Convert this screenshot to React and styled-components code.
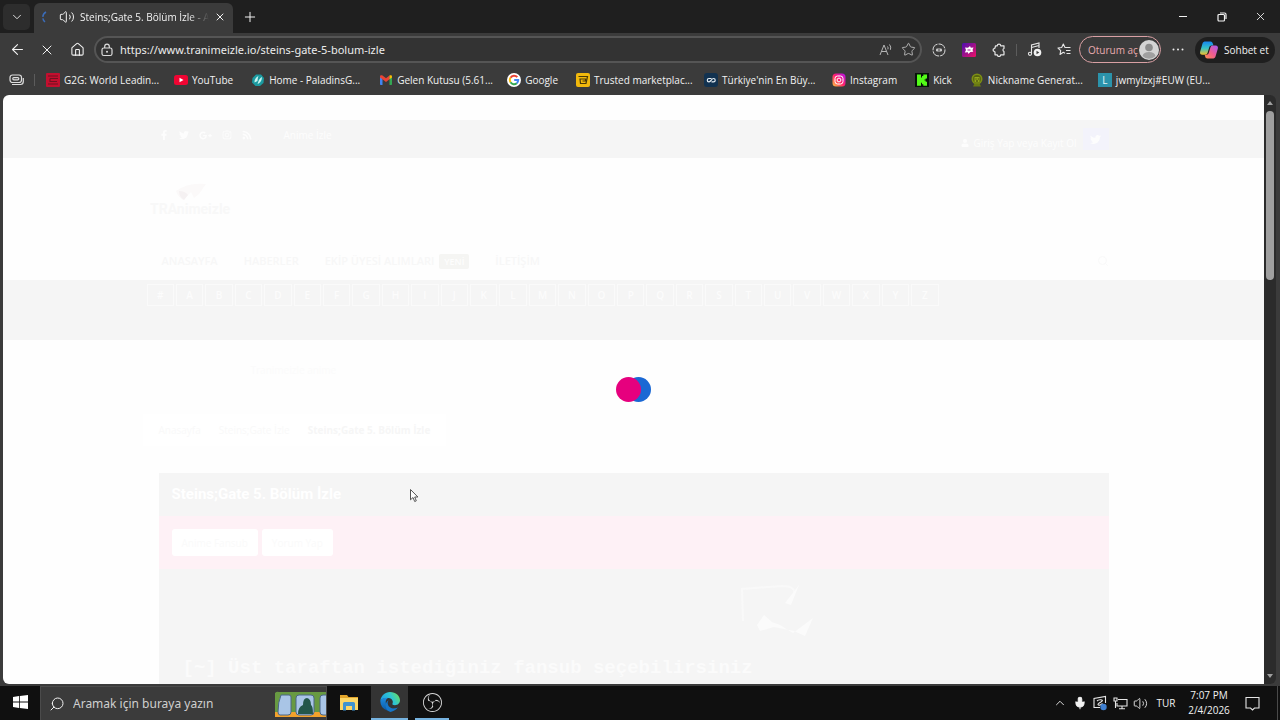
import React, { useState } from 'react'
import styled, { createGlobalStyle } from 'styled-components'
import {
    ArrowLeft, ChevronDown, ChevronUp, House, Mic, Plus,
    Search, Star, Volume2, X,
} from 'lucide-react'
import { FaFacebookF, FaGooglePlusG, FaInstagram, FaRss, FaTwitter, FaUser } from 'react-icons/fa'
import { SiObsstudio } from 'react-icons/si'

const GlobalStyle = createGlobalStyle`
* {
    box-sizing: border-box;
}
body {
    margin: 0;
    background: #3b3b3b;
    font-family: 'Open Sans', 'Noto Sans', sans-serif;
    font-size: 10px;
    color: #f2f2f2;
}
button, input {
    font: inherit;
    color: inherit;
}
button {
    padding: 0;
    border: none;
    background: transparent;
}
a {
    color: inherit;
    text-decoration: none;
}
svg {
    display: block;
    flex-shrink: 0;
}
`

const Desktop = styled.div`
height: 100vh;
display: flex;
flex-direction: column;
overflow: hidden;
position: relative;
`

/* tab strip */

const TabStrip = styled.div`
display: flex;
align-items: flex-end;
height: 33px;
padding-left: 3px;
background: #1f1f1f;
`

const TabMenu = styled.button`
display: flex;
align-items: center;
justify-content: center;
width: 27px;
height: 26px;
margin: 0 4px 3px 0;
border-radius: 5px;
background: #2d2d2d;
`

const Tab = styled.div`
display: flex;
align-items: center;
gap: 5px;
width: 199px;
height: 30px;
padding: 0 7px 3px 6px;
border-radius: 6px 6px 0 0;
background: #3b3b3b;
`

const TabTitle = styled.span`
flex: 1;
min-width: 0;
white-space: nowrap;
mask-image: linear-gradient(90deg, #000 84%, transparent);
`

const StripButton = styled.button`
display: flex;
align-items: center;
justify-content: center;
width: ${props => props.$width}px;
height: 33px;
`

const WindowButtons = styled.div`
display: flex;
margin-left: auto;
`

/* toolbar */

const Toolbar = styled.div`
display: flex;
align-items: center;
height: 33px;
padding: 0 5px 0 2px;
background: #3b3b3b;
`

const IconButton = styled.button`
display: flex;
align-items: center;
justify-content: center;
width: ${props => props.$width || 30}px;
height: 28px;
`

const AddressBar = styled.form`
flex: 1;
display: flex;
align-items: center;
height: 27px;
margin: 0 2px;
padding: 0 0 0 4px;
border: 2px solid #555;
border-radius: 14px;
background: #333;
`

const AddressInput = styled.input`
flex: 1;
min-width: 0;
margin-left: 6px;
padding: 0;
border: none;
outline: none;
background: transparent;
color: #ececec;
font-family: 'Noto Sans', sans-serif;
font-size: 11px;
`

const AddressButton = styled(IconButton)`
width: 23px;
height: 22px;
`

const Divider = styled.span`
width: 1px;
height: 12px;
margin: 0 2px;
background: #5c5c5c;
`

const SignIn = styled.button`
display: flex;
align-items: center;
justify-content: space-between;
width: 82px;
height: 27px;
padding: 0 1px 0 8px;
border: 1px solid #d9a0a4;
border-radius: 14px;
color: #e8abaf;
white-space: nowrap;
`

const Copilot = styled.button`
display: flex;
align-items: center;
gap: 5px;
width: 80px;
height: 26px;
padding-left: 4px;
border-radius: 13px;
background: #1f1f1f;
white-space: nowrap;
`

/* favorites */

const Favorites = styled.nav`
display: flex;
align-items: center;
height: 29px;
padding: 0 0 1px 1px;
background: #3b3b3b;
`

const Favorite = styled.a`
display: flex;
align-items: center;
gap: 4px;
width: ${props => props.$long ? '128px' : 'auto'};
padding-right: ${props => props.$long ? 0 : 18}px;
white-space: nowrap;
`

const FavoriteDivider = styled(Divider)`
margin: 0 11px 0 3px;
`

/* page */

const Viewport = styled.div`
flex: 1;
min-height: 0;
display: flex;
padding: 0 4px 2px 3px;
`

const Page = styled.main`
flex: 1;
display: flex;
flex-direction: column;
overflow: hidden;
border-radius: 6px 0 0 6px;
background: #fefefe;
position: relative;
`

const Wrap = styled.div`
width: 950px;
max-width: 100%;
margin: 0 auto;
`

const TopBar = styled.div`
flex-shrink: 0;
height: 38px;
margin-top: 25px;
background: #f5f5f5;
color: #fdfdfd;
`

const TopBarRow = styled(Wrap)`
display: flex;
align-items: flex-start;
padding-top: 8px;
line-height: 14px;
`

const Socials = styled.div`
display: flex;
align-items: center;
gap: 10px;
height: 14px;
margin-right: 32px;
`

const Account = styled.a`
display: flex;
align-items: center;
gap: 4px;
height: 14px;
margin: 8px 6px 0 auto;
`

const TwitterBadge = styled.a`
display: flex;
align-items: center;
justify-content: center;
width: 26px;
height: 22px;
background: #f3f3fb;
`

const SiteHeader = styled(Wrap)`
flex-shrink: 0;
display: flex;
flex-direction: column;
justify-content: space-between;
height: 122px;
padding: 22px 0 10px;
`

const SiteLogo = styled.a`
margin-left: -9px;
`

const MenuRow = styled.nav`
display: flex;
align-items: center;
gap: 26px;
padding-left: 3px;
font-size: 11px;
line-height: 18px;
font-weight: 600;
color: #f7f7f7;
`

const MenuLink = styled.a`
display: flex;
align-items: center;
gap: 5px;
`

const NewBadge = styled.span`
width: 30px;
height: 15px;
border-radius: 2px;
background: #f5f5f3;
color: #fdfdfd;
font-size: 9px;
line-height: 15px;
text-align: center;
`

const SiteSearch = styled.button`
display: flex;
margin-left: auto;
color: #f9f9f9;
`

const LetterBar = styled.div`
flex-shrink: 0;
height: 60px;
padding-top: 4px;
background: #f5f5f5;
`

const Letters = styled(Wrap)`
padding-right: 170px;
`

const LetterGrid = styled.div`
display: grid;
grid-template-columns: repeat(27, 1fr);
column-gap: 2px;
margin-left: -12px;
`

const Letter = styled.a`
height: 22px;
border: 1px solid #fafafa;
color: #fcfcfc;
font-weight: 600;
line-height: 20px;
text-align: center;
`

const Main = styled(Wrap)`
flex: 1;
display: flex;
flex-direction: column;
`

const Notice = styled.p`
margin: 23px 0 0 92px;
line-height: 14px;
color: #fbfbfb;
`

const Crumbs = styled.nav`
display: flex;
align-items: center;
gap: 18px;
align-self: flex-start;
height: 32px;
margin: 37px 0 27px -16px;
padding: 0 16px;
background: #fff;
color: #f9f9f9;

b {
    color: #f6f6f6;
}
`

const Player = styled.section`
flex: 1;
background: #f5f5f5;
`

const PlayerTitle = styled.h1`
margin: 0;
padding: 0 13px;
font-family: Roboto, sans-serif;
font-size: 15px;
font-weight: 700;
line-height: 43px;
color: #fff;
`

const SourceBar = styled.div`
display: flex;
gap: 4px;
padding: 13px;
background: #fef1f6;
`

const SourceButton = styled.button`
height: 27px;
padding: 0 10px;
border-radius: 3px;
background: #fff;
color: #fafafa;
`

const Stage = styled.div`
display: flex;
flex-direction: column;
padding: 14px 24px 0;
`

const StageArt = styled.svg`
width: 76px;
height: 60px;
margin-left: 556px;
`

const StageText = styled.p`
margin: 13px 0 0;
font-family: 'Liberation Mono', monospace;
font-size: 19px;
font-weight: 700;
line-height: 24px;
color: #fbfbfb;
white-space: nowrap;
`

const Loader = styled.div`
display: flex;
align-items: center;
justify-content: center;
position: absolute;
inset: 0;
pointer-events: none;
`

const Dot = styled.span`
width: 25px;
height: 25px;
border-radius: 50%;
background: ${props => props.$color};
z-index: ${props => props.$front ? 1 : 0};

& + & {
    margin-left: -15px;
}
`

const Scrollbar = styled.div`
display: flex;
flex-direction: column;
align-items: center;
width: 12px;
padding: 6px 0;
border-radius: 0 6px 6px 0;
background: #2b2b2b;
`

const ScrollThumb = styled.div`
width: 8px;
height: 169px;
margin: 6px 0 auto;
border-radius: 4px;
background: #9f9f9f;
`

/* taskbar */

const Taskbar = styled.footer`
display: flex;
height: 34px;
background: #101010;
`

const TaskButton = styled.button`
display: flex;
align-items: center;
justify-content: center;
width: ${props => props.$width}px;
height: 34px;
background: ${props => props.$active ? '#343434' : 'transparent'};
border-bottom: 2px solid ${props => props.$open ? '#76b3e0' : 'transparent'};

&:last-of-type {
    margin-left: 7px;
}
`

const TaskSearch = styled.label`
display: flex;
align-items: center;
gap: 8px;
width: 287px;
padding-left: 8px;
border: 1px solid #4b4b4b;
border-bottom: none;
background: #3b3b3b;
`

const SearchGlyph = styled(Search)`
transform: scaleX(-1);
`

const TaskInput = styled.input`
flex: 1;
min-width: 0;
padding: 0;
border: none;
outline: none;
background: transparent;
font-family: 'Noto Sans', sans-serif;
font-size: 12px;

&::placeholder {
    color: #cfcfcf;
    opacity: 1;
}
`

const Tray = styled.div`
display: flex;
align-items: center;
margin-left: auto;
margin-right: 2px;
padding-right: 9px;
border-right: 1px solid #4a4a4a;
`

const TrayButton = styled.button`
display: flex;
align-items: center;
justify-content: center;
width: ${props => props.$width || 20}px;
height: 34px;
`

const Clock = styled.time`
width: 54px;
line-height: 15px;
text-align: center;
`

const Pointer = styled.svg`
position: absolute;
left: 409px;
top: 488px;
width: 10px;
height: 15px;
`

const art = { width: 14, height: 14, viewBox: '0 0 14 14' }

const G2GIcon = () => (
    <svg {...art}>
        <rect width="14" height="14" rx="1" fill="#c30f2f" />
        <path d="M2 3h10M4 5.500h8M4 5.500v3h7M2 11h10" stroke="#6f1220" strokeWidth="1.1" fill="none" />
    </svg>
)

const YouTubeIcon = () => (
    <svg {...art}>
        <rect x="0" y="2" width="14" height="10" rx="2.5" fill="#f00533" />
        <path d="M5.5 4.8 9.5 7l-4 2.2z" fill="#fff" />
    </svg>
)

const PaladinsIcon = () => (
    <svg {...art}>
        <path d="M5 1.500h5L13 5l-.5 5L9 13H4.500L1 9.500 1.500 5z" fill="#1b9aa0" />
        <path d="M3.500 9.500c0-3 1.500-5.500 4-6.500-.8 2-.8 3-1 5zM6.500 11c1-2 1-5 4.500-7-.2 3-1 5.500-4.500 7z" fill="#c9f5f1" />
    </svg>
)

const GmailIcon = () => (
    <svg {...art}>
        <path d="M1 3.500 3.500 5v7H1.800C1.300 12 1 11.700 1 11.200z" fill="#4285f4" />
        <path d="M13 3.500 10.500 5v7h1.700c.5 0 .8-.3.8-.8z" fill="#34a853" />
        <path d="M1 3.500C1 2 2.500 1.800 3.500 2.600L7 5.200l3.500-2.600v3.700L7 9 3.500 6.300 1 4.500z" fill="#ea4335" />
        <path d="M10.500 2.600C11.500 1.800 13 2 13 3.500v1l-2.500 1.800z" fill="#fbbc04" />
    </svg>
)

const GoogleIcon = () => (
    <svg {...art}>
        <circle cx="7" cy="7" r="7" fill="#fff" />
        <g fill="none" strokeWidth="2">
            <path d="M10.300 4.200A4.200 4.200 0 0 0 3.500 4.800" stroke="#ea4335" />
            <path d="M3.500 4.800a4.200 4.200 0 0 0 0 4.400" stroke="#fbbc05" />
            <path d="M3.500 9.200a4.200 4.200 0 0 0 6.300 1" stroke="#34a853" />
            <path d="M9.800 10.200A4.200 4.200 0 0 0 11.200 7H7.200" stroke="#4285f4" />
        </g>
    </svg>
)

const MarketIcon = () => (
    <svg {...art}>
        <rect width="14" height="14" rx="2" fill="#f2b90c" />
        <path d="M2.500 3.500h9l-1.500 7H4.500L4 6h5.500v2H6.500" stroke="#4b3a06" strokeWidth="1.200" fill="none" />
    </svg>
)

const SteelIcon = () => (
    <svg {...art}>
        <rect width="14" height="14" rx="3" fill="#123250" />
        <path d="M7.500 5.500H5a1.700 1.700 0 0 0 0 3.400c2 0 2.500-3.400 4.500-3.400a1.700 1.700 0 0 1 0 3.400H7.500" stroke="#e6edf3" strokeWidth="1.200" fill="none" />
    </svg>
)

const InstagramIcon = () => (
    <svg {...art}>
        <defs>
            <linearGradient id="insta" x1="0" y1="1" x2="1" y2="0">
                <stop offset="0" stopColor="#ffc83d" />
                <stop offset=".5" stopColor="#ff1f6d" />
                <stop offset="1" stopColor="#b012f0" />
            </linearGradient>
        </defs>
        <rect x=".5" y=".5" width="13" height="13" rx="3.500" fill="url(#insta)" />
        <rect x="3" y="3" width="8" height="8" rx="2.500" fill="none" stroke="#fff" />
        <circle cx="7" cy="7" r="1.900" fill="none" stroke="#fff" />
    </svg>
)

const KickIcon = () => (
    <svg {...art}>
        <rect width="14" height="14" fill="#07130a" />
        <path d="M2 1.500h4v3h1V3h1.300V1.500H12v4h-1.300V6.500H9.500v1h1.200v1.200H12v4H8.300v-1.500H7V9.700H6v3H2z" fill="#53fc18" />
    </svg>
)

const NicknameIcon = () => (
    <svg {...art}>
        <circle cx="7" cy="6" r="4.700" fill="#56630f" stroke="#7d8f14" strokeWidth="1.600" />
        <path d="M4.500 4h5v4.500l-1 1h-3l-1-1z" fill="#93a51c" />
        <path d="M3 13.500l1.500-3h5l1.500 3z" fill="#6a7a12" />
        <path d="M5.500 6h1M7.800 6h1M6 8h2" stroke="#323a08" />
    </svg>
)

const LetterTile = styled.span`
width: 14px;
height: 14px;
background: #2b93ab;
color: #e5f6fa;
line-height: 14px;
text-align: center;
`

const CopilotIcon = () => (
    <svg width="20" height="20" viewBox="0 0 20 20">
        <defs>
            <linearGradient id="copA" x1="0" y1="0" x2="0" y2="1">
                <stop offset="0" stopColor="#1686f0" />
                <stop offset=".5" stopColor="#35c2c6" />
                <stop offset="1" stopColor="#f5c22c" />
            </linearGradient>
            <linearGradient id="copB" x1="1" y1="0" x2="0" y2="1">
                <stop offset="0" stopColor="#a55bf5" />
                <stop offset=".5" stopColor="#ee5b93" />
                <stop offset="1" stopColor="#ff8d4a" />
            </linearGradient>
        </defs>
        <path d="M6.500 1.500h5c1.500 0 2 1 2.400 2.300l.5 1.700h-1.700c-1.500 0-2.200.8-2.600 2.200l-1.500 5.100c-.4 1.300-1 2-2.500 2H3.500C1.500 14.800.6 13.500 1.200 11.500l2.300-8C4 2 5 1.500 6.500 1.500z" fill="url(#copA)" />
        <path d="M13.500 18.500h-5c-1.500 0-2-1-2.400-2.300l-.4-1.400h1.600c1.500 0 2.200-.8 2.600-2.200l1.500-5.100c.4-1.300 1-2 2.500-2h2.600c2 0 2.900 1.300 2.300 3.300l-2.300 7.700c-.5 1.500-1.500 2-3 2z" fill="url(#copB)" />
    </svg>
)

const AvatarIcon = () => (
    <svg width="20" height="20" viewBox="0 0 20 20">
        <circle cx="10" cy="10" r="10" fill="#d4d4d4" />
        <circle cx="10" cy="7.500" r="3.800" fill="#8c8c8c" />
        <path d="M3.500 16c.5-2.800 3-4 6.500-4s6 1.200 6.500 4a9 9 0 0 1-13 0z" fill="#a0a0a0" />
    </svg>
)

const SpinnerIcon = () => (
    <svg width="14" height="14" viewBox="0 0 14 14">
        <path d="M6 2A6 6 0 0 0 5 12" fill="none" stroke="#3b6cb8" strokeWidth="1.500" strokeDasharray="6 1.500" />
    </svg>
)

const LockIcon = () => (
    <svg width="14" height="14" viewBox="0 0 14 14" fill="none" stroke="#dcdcdc" strokeWidth="1.200">
        <rect x="2" y="5" width="10" height="7.500" rx="1.800" />
        <path d="M4.700 5V3.500a2.300 2.300 0 0 1 4.600 0V5" />
        <circle cx="7" cy="8.700" r="1" fill="#dcdcdc" stroke="none" />
    </svg>
)

const ReadAloudIcon = () => (
    <svg width="14" height="14" viewBox="0 0 14 14" fill="none" stroke="#b4b4b4" strokeWidth="1">
        <path d="M1 12 5 2l4 10M2.500 8.500h5M8.500 3.500q1 1.200.4 2.800M10.500 1.500q2 2.500.9 5.300" />
    </svg>
)

const BadgeIcon = () => (
    <svg width="14" height="14" viewBox="0 0 14 14" fill="none" stroke="#dcdcdc">
        <circle cx="7" cy="7" r="6" strokeDasharray="8 1" />
        <rect x="4" y="5.500" width="6" height="3" rx="1.200" fill="#c8c8c8" stroke="none" />
        <path d="M7 6v2" stroke="#3b3b3b" />
    </svg>
)

const ExtensionIcon = () => (
    <svg width="14" height="14" viewBox="0 0 14 14">
        <defs>
            <linearGradient id="ext" x1="0" y1="0" x2="1" y2="1">
                <stop offset="0" stopColor="#4a0fb0" />
                <stop offset="1" stopColor="#ee1166" />
            </linearGradient>
        </defs>
        <rect width="14" height="14" rx="1.500" fill="url(#ext)" />
        <path d="M3 4.500l3 .3L8 3l.8 1.800 2.700-.3-1 2.500.8 1.800-3 .2L6.500 11 5.800 9.300l-3 .2L4 7z" fill="#fff" />
        <path d="M5.500 7h3" stroke="#a31a93" />
    </svg>
)

const PuzzleIcon = () => (
    <svg width="14" height="14" viewBox="0 0 14 14" fill="none" stroke="#e6e6e6" strokeWidth="1.200" strokeLinejoin="round">
        <path d="M3.500 2.800h1.800a1.700 1.700 0 0 1 3.400 0H12v2.700a1.600 1.600 0 0 0 0 3V11.800H8.700a1.700 1.700 0 0 1-3.400 0H3V9L1.200 7.800V6.200L3 5z" />
    </svg>
)

const MusicIcon = () => (
    <svg width="15" height="15" viewBox="0 0 15 15" fill="none" stroke="#e6e6e6" strokeWidth="1.100">
        <path d="M4.500 11.500V3L12 1v5M4.500 5.500 12 3.500" />
        <circle cx="3" cy="11.800" r="1.600" />
        <circle cx="10.500" cy="10.500" r="3.800" fill="#f2f2f2" stroke="none" />
        <path d="M9.500 8.700v3.600l2.800-1.800z" fill="#3b3b3b" stroke="none" />
    </svg>
)

const CollectionsIcon = () => (
    <svg width="15" height="14" viewBox="0 0 15 14" fill="none" stroke="#e6e6e6" strokeWidth="1.100" strokeLinejoin="round">
        <path d="M8 10.200 6.300 9.300 3 11.500l.7-3.800L1 5l3.700-.5L6.300 1l1.700 3.500h5.500M9 7.500h4.500M9.500 10.500h4" />
    </svg>
)

const StackIcon = () => (
    <svg width="15" height="12" viewBox="0 0 15 12" fill="none" stroke="#dedede" strokeWidth="1.200">
        <rect x="1" y="1" width="11.500" height="7.500" rx="2.500" />
        <rect x="3.800" y="3.600" width="6" height="2.200" rx="1" />
        <path d="M3 10.500h8.500c1.700 0 2.800-1 2.800-3V4" />
    </svg>
)

const WindowsLogo = () => (
    <svg width="15" height="14" viewBox="0 0 15 14" fill="#fff">
        <path d="M0 2l6-.9v5.500H0zM6.800 1 15 0v6.600H6.800zM0 7.400h6v5.500L0 12zM6.800 7.400H15V14l-8.200-1.100z" />
    </svg>
)

const TrainArt = () => (
    <svg width="51" height="26" viewBox="0 0 51 26">
        <path d="M0 2q2-2 4-1h47v25H0z" fill="#689a42" />
        <path d="M0 21h51v5H0z" fill="#f3a22c" />
        <g fill="#a9c5e6" stroke="#4a6688" strokeWidth="1">
            <path d="M6 4h8q2 0 2 2v15q0 3-3 3H5q-2 0-2-3 0-10 3-17z" />
            <rect x="21" y="4" width="18" height="20" rx="3" />
            <path d="M51 4h-3q-3 0-3 3v14q0 3 3 3h3" />
        </g>
        <path d="M23 23q0-7 5-9 0-7 4-7 4 1 4 7 2 1 2 9z" fill="#23564a" />
    </svg>
)

const FolderIcon = () => (
    <svg width="20" height="17" viewBox="0 0 20 17">
        <path d="M1 1h7l1.500 2H19v4H1z" fill="#e3a52a" />
        <path d="M1 4h18v12H1z" fill="#fbd667" />
        <path d="M4 16.500V9.500Q4 8 5.500 8h9Q16 8 16 9.500v7h-3V12H7v4.500z" fill="#3f93d0" />
    </svg>
)

const EdgeIcon = () => (
    <svg width="20" height="20" viewBox="0 0 20 20">
        <defs>
            <linearGradient id="edgeA" x1="0" y1=".6" x2="1" y2=".2">
                <stop offset="0" stopColor="#1c9be6" />
                <stop offset=".55" stopColor="#2fc6d2" />
                <stop offset="1" stopColor="#6be05b" />
            </linearGradient>
            <linearGradient id="edgeB" x1="0" y1="0" x2="0" y2="1">
                <stop offset="0" stopColor="#1d8be0" />
                <stop offset="1" stopColor="#0c59a4" />
            </linearGradient>
        </defs>
        <path d="M.3 9C1 3.500 5 0 10 0c6 0 10 4 10 8.300 0 3-2.300 4.900-5 4.900-2.300 0-3-.9-2.500-1.700.9-1.500.3-5-4-5.500C4.500 5.700 1.500 7 .3 9z" fill="url(#edgeA)" />
        <path d="M.3 9C1.500 6.500 5 5.300 8 6 6 7 5 9.500 6.200 12.500c1.500 3.700 6.300 5.500 11.300 3.300A10 10 0 0 1 .3 9z" fill="url(#edgeB)" />
        <path d="M8.600 8.200c-1.300 1.600-1.300 4.300.4 6.300 2 2.200 5.800 2.700 8.800 1-1.500 2.200-4.300 4-7.300 4.400C5.500 19 3.500 11 8.600 8.200z" fill="#1676c9" />
    </svg>
)

const PenIcon = () => (
    <svg width="16" height="16" viewBox="0 0 16 16" fill="none" stroke="#e6e6e6" strokeWidth="1.100">
        <path d="M13.500 8V1.500L2 3.500v9h6M5 6c1.500-1.500 5-1.500 5.500-.5S5.500 8 6 9.500s3 .5 4.500-1" />
        <circle cx="11.500" cy="12" r="3.200" fill="#3f7fd0" stroke="none" />
    </svg>
)

const NetworkIcon = () => (
    <svg width="15" height="13" viewBox="0 0 15 13" fill="none" stroke="#e6e6e6" strokeWidth="1.100">
        <path d="M5 2.500h9v6.500H4V6M9 9v2.500M6 11.800h6M1 1h3v3H1zM2.500 4v7" />
    </svg>
)

const NotifyIcon = () => (
    <svg width="15" height="15" viewBox="0 0 15 15" fill="none" stroke="#e6e6e6" strokeWidth="1.100">
        <path d="M1 1.500h13v10.500H9.500l-2 2-2-2H1z" />
    </svg>
)

const favorites = [
    { label: 'G2G: World Leadin...', icon: <G2GIcon />, long: true },
    { label: 'YouTube', icon: <YouTubeIcon /> },
    { label: 'Home - PaladinsG...', icon: <PaladinsIcon />, long: true },
    { label: 'Gelen Kutusu (5.61...', icon: <GmailIcon />, long: true },
    { label: 'Google', icon: <GoogleIcon /> },
    { label: 'Trusted marketplac...', icon: <MarketIcon />, long: true },
    { label: "Türkiye'nin En Büy...", icon: <SteelIcon />, long: true },
    { label: 'Instagram', icon: <InstagramIcon /> },
    { label: 'Kick', icon: <KickIcon /> },
    { label: 'Nickname Generat...', icon: <NicknameIcon />, long: true },
    { label: 'jwmylzxj#EUW (EU...', icon: <LetterTile>L</LetterTile>, long: true },
]

const letters = '#ABCDEFGHIJKLMNOPQRSTUVWXYZ'.split('')

const Browser = () => {

    const [url, setUrl] = useState('https://www.tranimeizle.io/steins-gate-5-bolum-izle')

    return (
        <>
            <TabStrip>
                <TabMenu aria-label="Sekme menüsü"><ChevronDown size={14} strokeWidth={1.500} /></TabMenu>
                <Tab>
                    <SpinnerIcon />
                    <Volume2 size={16} strokeWidth={1.500} />
                    <TabTitle>Steins;Gate 5. Bölüm İzle - Ani</TabTitle>
                    <button aria-label="Sekmeyi kapat"><X size={12} strokeWidth={2} /></button>
                </Tab>
                <StripButton $width={34} aria-label="Yeni sekme"><Plus size={16} strokeWidth={1.500} /></StripButton>
                <WindowButtons>
                    <StripButton $width={38} aria-label="Simge durumuna küçült">
                        <svg width="10" height="10" viewBox="0 0 10 10" stroke="#f2f2f2"><path d="M1 4.500h8" /></svg>
                    </StripButton>
                    <StripButton $width={39} aria-label="Önceki boyut">
                        <svg width="10" height="10" viewBox="0 0 10 10" fill="none" stroke="#f2f2f2" strokeWidth="1.200">
                            <rect x="1" y="2.500" width="6.500" height="6.500" rx="1" />
                            <path d="M3 1h4.500Q9 1 9 2.500V7" />
                        </svg>
                    </StripButton>
                    <StripButton $width={39} aria-label="Kapat"><X size={13} strokeWidth={1.600} /></StripButton>
                </WindowButtons>
            </TabStrip>

            <Toolbar>
                <IconButton aria-label="Geri"><ArrowLeft size={17} strokeWidth={1.500} /></IconButton>
                <IconButton aria-label="Durdur"><X size={16} strokeWidth={1.500} /></IconButton>
                <IconButton aria-label="Giriş sayfası"><House size={15} strokeWidth={1.700} /></IconButton>
                <AddressBar onSubmit={e => e.preventDefault()}>
                    <LockIcon />
                    <AddressInput aria-label="Adres" spellCheck="false" value={url} onChange={e => setUrl(e.target.value)} />
                    <AddressButton type="button" aria-label="Sesli oku"><ReadAloudIcon /></AddressButton>
                    <AddressButton type="button" aria-label="Sık kullanılanlara ekle"><Star size={15} strokeWidth={1.500} color="#b8b8b8" /></AddressButton>
                </AddressBar>
                <IconButton aria-label="Engelleyici"><BadgeIcon /></IconButton>
                <IconButton aria-label="Eklenti"><ExtensionIcon /></IconButton>
                <IconButton aria-label="Uzantılar"><PuzzleIcon /></IconButton>
                <Divider />
                <IconButton aria-label="Medya"><MusicIcon /></IconButton>
                <IconButton aria-label="Sık kullanılanlar"><CollectionsIcon /></IconButton>
                <SignIn>Oturum aç<AvatarIcon /></SignIn>
                <IconButton $width={34} aria-label="Ayarlar">
                    <svg width="12" height="3" viewBox="0 0 12 3" fill="#ededed">
                        <circle cx="1.500" cy="1.500" r="1" /><circle cx="6" cy="1.500" r="1" /><circle cx="10.500" cy="1.500" r="1" />
                    </svg>
                </IconButton>
                <Copilot><CopilotIcon />Sohbet et</Copilot>
            </Toolbar>

            <Favorites>
                <IconButton aria-label="Çalışma alanları"><StackIcon /></IconButton>
                <FavoriteDivider />
                {favorites.map(item => (
                    <Favorite key={item.label} href="#" $long={item.long}>{item.icon}{item.label}</Favorite>
                ))}
            </Favorites>
        </>
    )
}

const Site = () => (
    <Page>
        <TopBar>
            <TopBarRow>
                <Socials>
                    <FaFacebookF size={10} />
                    <FaTwitter size={10} />
                    <FaGooglePlusG size={13} />
                    <FaInstagram size={10} />
                    <FaRss size={10} />
                </Socials>
                <a href="#">Anime İzle</a>
                <Account href="#"><FaUser size={8} />Giriş Yap veya Kayıt Ol</Account>
                <TwitterBadge href="#" aria-label="Twitter"><FaTwitter size={11} /></TwitterBadge>
            </TopBarRow>
        </TopBar>

        <SiteHeader>
            <SiteLogo href="#" aria-label="Tranimeizle">
                <svg width="84" height="38" viewBox="0 0 84 38">
                    <path d="M26 11q12-9 30-7l-7 10-5 4-3-6-8 8q-5-3-7-9z" fill="#fbf9f9" />
                    <path d="M29 11q6 0 9 4l-4 5q-5-3-5-9z" fill="#f5f1f2" />
                    <text x="0" y="34" fontFamily="Roboto" fontSize="14" fontWeight="700" fill="#f8f8f8">TRAnimeizle</text>
                </svg>
            </SiteLogo>
            <MenuRow>
                <MenuLink href="#">ANASAYFA</MenuLink>
                <MenuLink href="#">HABERLER</MenuLink>
                <MenuLink href="#">EKİP ÜYESİ ALIMLARI <NewBadge>YENİ</NewBadge></MenuLink>
                <MenuLink href="#">İLETİŞİM</MenuLink>
                <SiteSearch aria-label="Ara"><Search size={12} /></SiteSearch>
            </MenuRow>
        </SiteHeader>

        <LetterBar>
            <Letters>
                <LetterGrid>
                    {letters.map(letter => <Letter key={letter} href="#">{letter}</Letter>)}
                </LetterGrid>
            </Letters>
        </LetterBar>

        <Main>
            <Notice>Tranimeizle anime</Notice>
            <Crumbs>
                <a href="#">Anasayfa</a>
                <a href="#">Steins;Gate İzle</a>
                <b>Steins;Gate 5. Bölüm İzle</b>
            </Crumbs>
            <Player>
                <PlayerTitle>Steins;Gate 5. Bölüm İzle</PlayerTitle>
                <SourceBar>
                    <SourceButton>Anime Fansub</SourceButton>
                    <SourceButton>Yorum Yap</SourceButton>
                </SourceBar>
                <Stage>
                    <StageArt viewBox="0 0 76 60" fill="none" stroke="#f9f9f9" strokeWidth="2">
                        <path d="M4 38 3 6l40-3q14 0 12 8l-5 9" />
                        <path d="M60 2 52 22l-6-2zM18 42l7-10 8 7 8 3 13 8 20-15-8 18-11-5-20-4-14 4z" fill="#fbfbfb" stroke="none" />
                    </StageArt>
                    <StageText>[~] Üst taraftan istediğiniz fansub seçebilirsiniz</StageText>
                </Stage>
            </Player>
        </Main>

        <Loader>
            <Dot $color="#e6007e" $front />
            <Dot $color="#1a68d4" />
        </Loader>
    </Page>
)

const WindowsBar = () => (
    <Taskbar>
        <TaskButton $width={40} aria-label="Başlat"><WindowsLogo /></TaskButton>
        <TaskSearch>
            <SearchGlyph size={16} strokeWidth={1.500} />
            <TaskInput placeholder="Aramak için buraya yazın" aria-label="Aramak için buraya yazın" />
            <TrainArt />
        </TaskSearch>
        <TaskButton $width={44} aria-label="Dosya Gezgini"><FolderIcon /></TaskButton>
        <TaskButton $width={37} $active $open aria-label="Microsoft Edge"><EdgeIcon /></TaskButton>
        <TaskButton $width={34} $open aria-label="OBS Studio"><SiObsstudio size={19} color="#d8d8d8" /></TaskButton>
        <Tray>
            <TrayButton aria-label="Gizli simgeler"><ChevronUp size={14} strokeWidth={1.500} /></TrayButton>
            <TrayButton aria-label="Mikrofon"><Mic size={14} strokeWidth={1.800} fill="#f2f2f2" /></TrayButton>
            <TrayButton aria-label="Kalem"><PenIcon /></TrayButton>
            <TrayButton aria-label="Ağ"><NetworkIcon /></TrayButton>
            <TrayButton aria-label="Ses"><Volume2 size={15} strokeWidth={1.400} /></TrayButton>
            <TrayButton $width={32}>TUR</TrayButton>
            <Clock>7:07 PM<br />2/4/2026</Clock>
            <TrayButton $width={32} aria-label="Bildirimler"><NotifyIcon /></TrayButton>
        </Tray>
    </Taskbar>
)

const App = () => (
    <Desktop>
        <GlobalStyle />
        <Browser />
        <Viewport>
            <Site />
            <Scrollbar>
                <svg width="6" height="4" viewBox="0 0 6 4" fill="#9f9f9f"><path d="M3 0l3 4H0z" /></svg>
                <ScrollThumb />
                <svg width="6" height="4" viewBox="0 0 6 4" fill="#9f9f9f"><path d="M0 0h6L3 4z" /></svg>
            </Scrollbar>
        </Viewport>
        <WindowsBar />
        <Pointer viewBox="0 0 10 15">
            <path d="M1.500 1.500v10.300l2.500-2.300 1.700 4 1.600-.7-1.600-3.800h3.200z" fill="#fff" stroke="#444" strokeWidth=".9" />
        </Pointer>
    </Desktop>
)

export default App
